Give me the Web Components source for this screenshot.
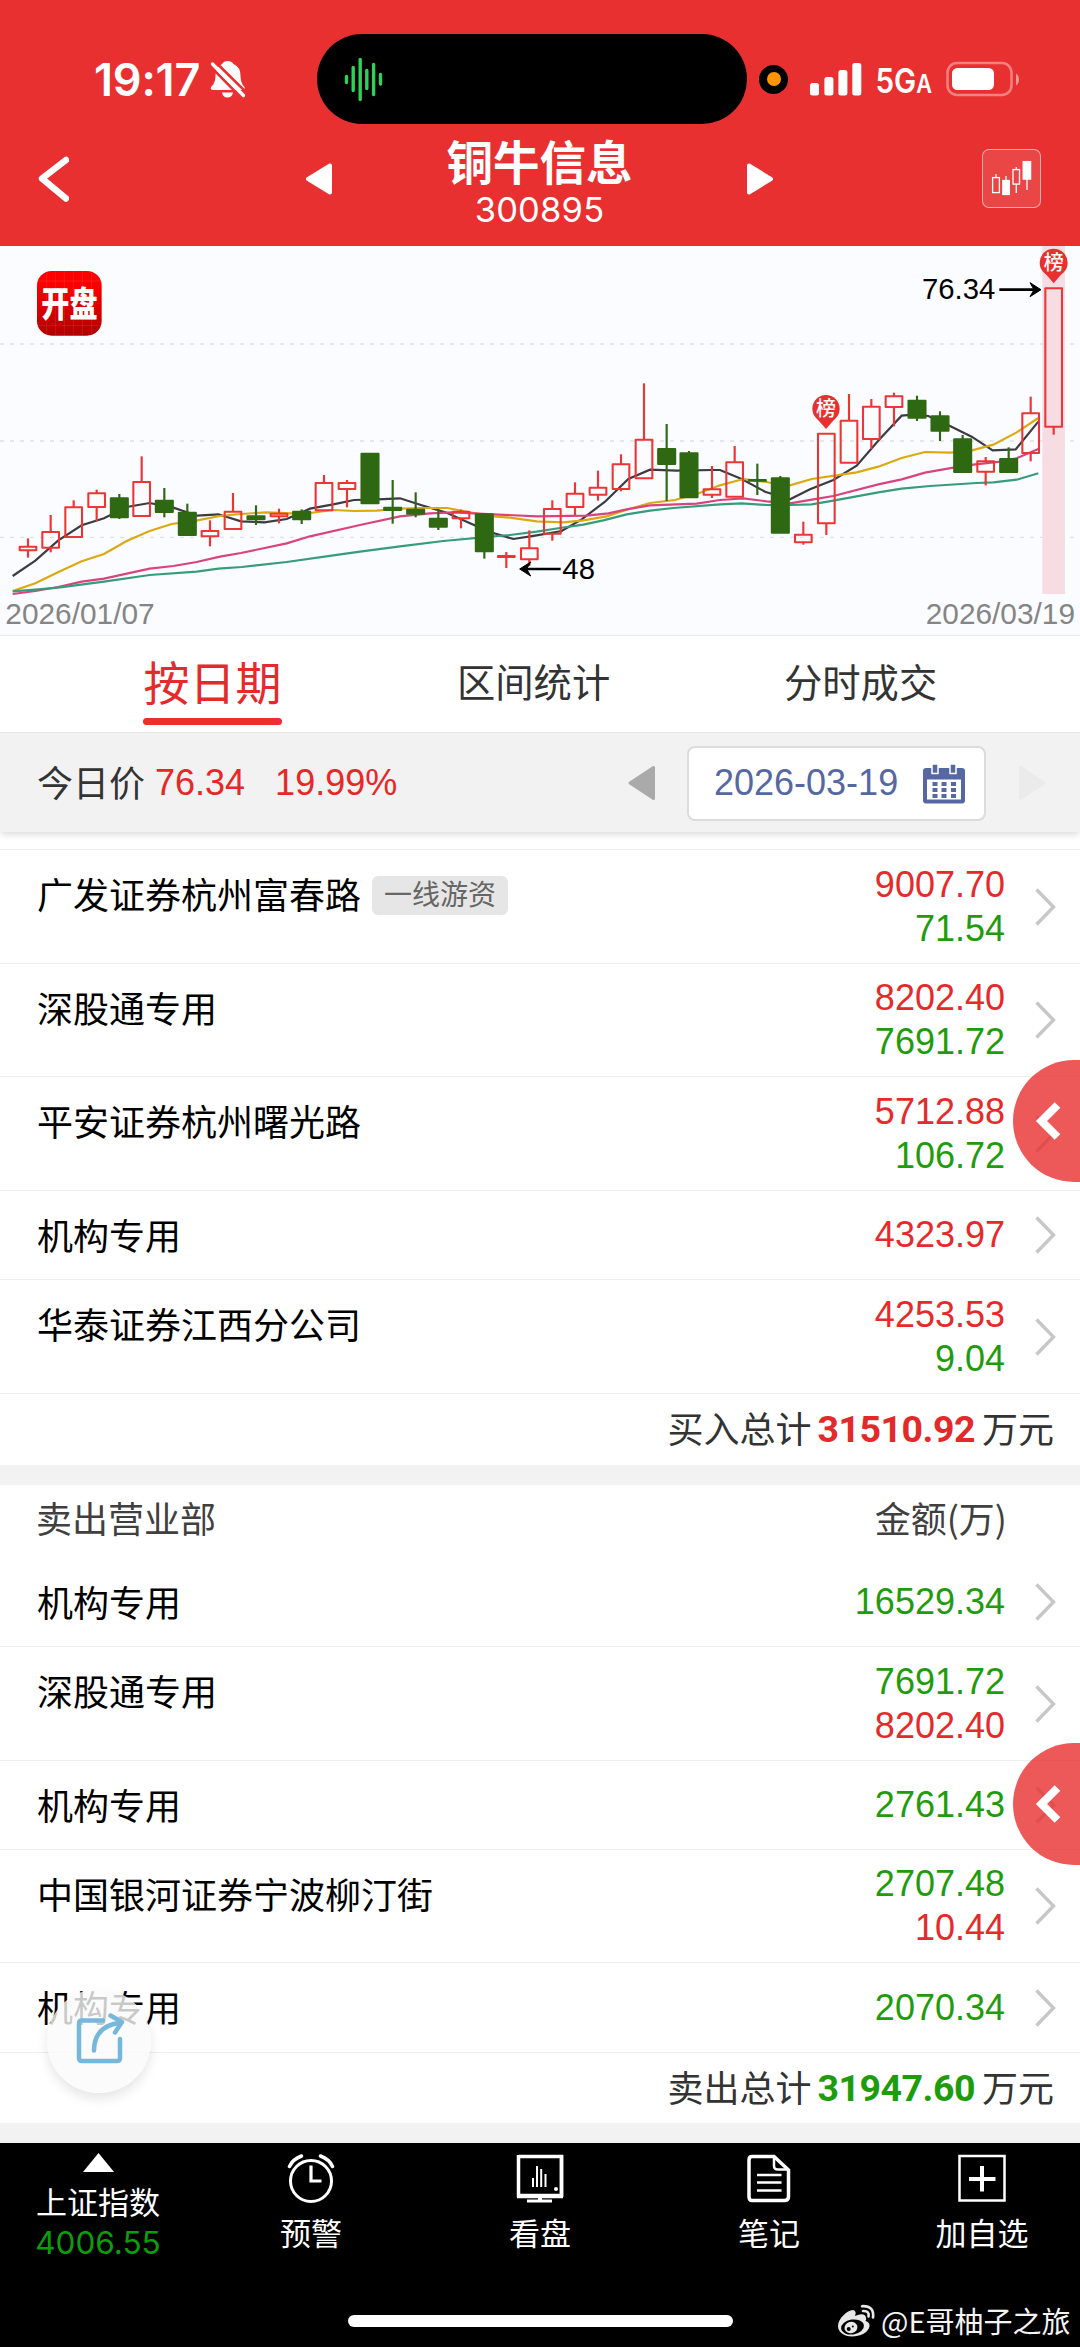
<!DOCTYPE html>
<html lang="zh-CN">
<head>
<meta charset="utf-8">
<meta name="viewport" content="width=1080">
<title>铜牛信息 300895</title>
<style>
html, body { margin: 0; padding: 0; background: #fff; }
body { width: 1080px; height: 2347px; overflow: hidden; }
</style>
</head>
<body>
<stock-app></stock-app>
<script>
const CJK = '"Noto Sans CJK SC", sans-serif';
const NUM = '"Liberation Sans", "Noto Sans CJK SC", sans-serif';

class BaseElement extends HTMLElement {
  connectedCallback() {
    if (this.shadowRoot) return;
    const t = document.createElement('template');
    t.innerHTML = `<style>*{box-sizing:border-box}svg{display:block;flex:none}${this.css()}</style>${this.html()}`;
    this.attachShadow({ mode: 'open' }).append(t.content.cloneNode(true));
  }
  css() { return ''; }
  html() { return ''; }
}

class StatusBar extends BaseElement {
  css() { return `
    :host{display:flex;align-items:center;height:124px;padding:34px 0 0 94px;color:#fff}
    .time{width:110px;font:600 45px/50px Inter,sans-serif;letter-spacing:-.2px;white-space:nowrap;padding-top:1px}
    .bell{margin-left:6px}
    .island{margin-left:71px;width:430px;height:90px;border-radius:45px;background:#000;display:flex;align-items:center;padding-left:27px;flex:none}
    .dot{margin-left:12px;width:29px;height:29px;border-radius:50%;background:#000;border:0;display:flex;align-items:center;justify-content:center;flex:none}
    .dot i{width:14px;height:14px;border-radius:50%;background:#ff9500}
    .sig{margin-left:22px}.net{margin-left:13px}.bat{margin-left:11px}`; }
  html() { return `
    <div class="time">19:17</div>
    <svg class="bell" width="36" height="40" viewBox="210 60 36 40">
      <path d="M227.500 62q4 0 6 3q7 3 7 12q0 7 4 11q1 3-2 3H213q-3 0-2-3q4.500-4 4.500-11q0-9 6.500-12q2-3 5.500-3zM222 93.500h11q-1 5-5.500 5t-5.500-5z" fill="#fff"/>
      <path d="M209.500 66.500L242 99.500M215 62.500L246 93" stroke="#e93030" stroke-width="2.600"/>
      <path d="M212.500 65L243.500 96.500" stroke="#fff" stroke-width="3.400" stroke-linecap="round"/>
    </svg>
    <div class="island">
      <svg width="40" height="46" viewBox="343 56.500 40 46" stroke="#30d158" stroke-width="3.400" stroke-linecap="round">
        <path d="M345.500 77v6M352.200 68v23M359.200 60v40M365.800 71v18M372.600 65v30M379.500 75v9.500"/>
      </svg>
    </div>
    <div class="dot"><i></i></div>
    <svg class="sig" width="52" height="34" viewBox="810 62 52 34" fill="#fff">
      <rect x="810" y="83" width="9" height="12.500" rx="2.500"/><rect x="824.400" y="77" width="9" height="18.500" rx="2.500"/>
      <rect x="838.400" y="70" width="9" height="25.500" rx="2.500"/><rect x="852.300" y="63" width="9" height="32.500" rx="2.500"/>
    </svg>
    <svg class="net" width="60" height="50" viewBox="875 55 60 50" fill="#fff" font-family="Inter,sans-serif" font-weight="600">
      <text x="875.500" y="94" font-size="34" textLength="56.500" lengthAdjust="spacingAndGlyphs">5G<tspan font-size="25">A</tspan></text>
    </svg>
    <svg class="bat" width="74" height="36" viewBox="947 61 74 36">
      <rect x="948.500" y="63" width="64" height="32" rx="9.500" fill="none" stroke="#fff" stroke-opacity=".4" stroke-width="2.500"/>
      <rect x="953" y="68" width="42" height="22" rx="5.500" fill="#fff"/>
      <path d="M1017 73.500q3 2 3 6t-3 6z" fill="#fff" fill-opacity=".5"/>
    </svg>`; }
}

class TitleBar extends BaseElement {
  css() { return `
    :host{display:flex;align-items:center;height:122px;padding:0 39px 13px 38px;color:#fff}
    .prev{margin-left:236px}
    .name{flex:1;align-self:flex-start;margin-top:14px;text-align:center}
    ::slotted(span){display:block}
    h1{margin:0;font:600 46.500px/44px ${CJK};height:50px}
    p{margin:0;font:400 34.500px/44px Inter,sans-serif;letter-spacing:.2px}
    .btn{margin-left:208px;width:59px;height:59px;border-radius:7px;border:1px solid rgba(255,255,255,.55);background:rgba(255,255,255,.11);flex:none}`; }
  html() { return `
    <svg width="31" height="46" viewBox="38 155.500 31 46"><path d="M66 159.500L42 178L66 198" fill="none" stroke="#fff" stroke-width="6.500" stroke-linecap="round" stroke-linejoin="round"/></svg>
    <svg class="prev" width="27" height="32" viewBox="0 0 27 32"><path d="M25 2.500V29.500L3 16z" fill="#fff" stroke="#fff" stroke-width="4" stroke-linejoin="round"/></svg>
    <div class="name"><h1><slot name="name"></slot></h1><p><slot name="code"></slot></p></div>
    <svg width="27" height="32" viewBox="0 0 27 32"><path d="M2 2.500V29.500L24 16z" fill="#fff" stroke="#fff" stroke-width="4" stroke-linejoin="round"/></svg>
    <div class="btn"><svg width="57" height="57" viewBox="983 150 57 57" fill="none" stroke="#fff" stroke-width="1.300">
      <rect x="992.600" y="177.600" width="6.800" height="15"/><path d="M996 177.600V174"/>
      <rect x="1002.800" y="180.500" width="6.500" height="14" fill="#fff"/><path d="M1006 180V176"/>
      <rect x="1013" y="169.600" width="6.500" height="14.500"/><path d="M1016.300 169.600V167M1016.300 184.500V193"/>
      <rect x="1023.200" y="161.600" width="7.400" height="17.500" fill="#fff"/><path d="M1027 179V190"/>
    </svg></div>`; }
}

/* colour, centre x, wick top, wick bottom, body top, body bottom (one px = 3 units) */
const CANDLES = [
  ['r',84,895,953,920,931],['r',152,825,937,876,923],['r',221,781,893,802,891],['r',290,749,843,760,801],
  ['g',358,762,837,774,833],['r',425,649,828,726,828],['g',493,744,832,781,817],['g',562,791,886,817,886],
  ['r',630,841,919,873,889],['r',699,759,867,815,867],['g',768,796,855,828,839],['r',837,806,850,821,829],
  ['g',905,808,852,814,839],['r',972,705,811,729,811],['r',1041,720,802,729,747],['g',1110,640,791,640,791],
  ['g',1178,720,851,802,811],['g',1247,757,832,808,822],['g',1315,808,870,835,861],['r',1383,809,865,815,835],
  ['g',1453,822,956,822,935],['r',1519,936,984,948,951],['r',1588,871,978,925,958],['r',1657,781,902,807,881],
  ['r',1725,727,825,761,801],['r',1794,692,782,743,764],['r',1863,643,754,673,747],['r',1932,430,715,599,715],
  ['g',2000,552,783,626,673],['g',2067,633,773,639,773],['r',2136,678,774,748,764],['r',2204,618,770,667,770],
  ['g',2272,671,765,719,723],['g',2341,708,879,714,879],['r',2410,845,914,884,907],['r',2479,581,885,581,850],
  ['r',2547,462,668,542,668],['r',2614,477,627,500,597],['r',2682,458,559,469,501],['g',2751,467,543,481,534],
  ['g',2820,514,603,528,573],['g',2888,585,699,597,697],['r',2957,651,736,664,695],['g',3026,622,697,656,697],
  ['r',3092,470,664,520,639],['r',3161,145,584,145,560]
];
const LINES = [
  ['#3b3b40','38,1008 106,962 174,902 245,856 312,835 380,801 449,789 520,803 592,827 655,823 723,844 793,847 860,837 930,806 1000,793 1062,780 1132,778 1200,775 1270,797 1340,818 1410,850 1470,876 1540,897 1610,886 1685,873 1745,838 1815,785 1885,717 1950,689 2030,692 2140,690 2160,690 2225,717 2295,755 2370,778 2430,748 2500,720 2570,677 2640,596 2705,527 2740,524 2785,528 2850,558 2915,590 2978,631 3047,628 3115,545'],
  ['#dba910','38,1053 106,1030 174,997 245,964 312,942 380,903 449,873 515,852 592,841 660,828 723,822 800,817 870,820 930,819 1000,810 1062,813 1130,812 1200,806 1270,804 1342,804 1405,816 1480,829 1530,833 1610,844 1690,847 1750,841 1820,829 1880,809 1950,789 2025,780 2090,762 2160,736 2230,717 2300,726 2340,735 2370,736 2435,717 2570,697 2635,680 2705,654 2775,636 2850,638 2905,634 2980,614 3050,577 3115,534'],
  ['#d9437f','38,1062 106,1053 174,1041 245,1025 312,1016 449,986 520,978 590,966 660,950 723,939 860,910 930,889 1080,855 1200,829 1290,820 1360,817 1480,823 1610,829 1760,827 1825,820 1880,808 1950,796 2090,791 2160,780 2230,775 2300,784 2370,790 2440,778 2500,768 2635,733 2705,718 2775,698 2860,683 2920,674 3000,665 3050,655 3115,627'],
  ['#379c7a','38,1054 106,1049 174,1043 312,1025 449,1005 590,995 655,986 725,981 860,966 1000,946 1080,935 1200,919 1330,903 1480,889 1530,885 1610,875 1680,864 1750,854 1810,841 1880,823 1950,812 2020,804 2160,793 2225,790 2300,795 2370,795 2435,793 2500,782 2635,757 2705,746 2790,738 2930,729 2980,727 3050,719 3115,700']
];
class KlineChart extends BaseElement {
  css() { return `:host{display:block;height:390px;background:#fbfcff;border-bottom:1px solid #e9eaec}`; }
  html() {
    const candle = ([c, x, wt, wb, t, b]) => {
      const col = c === 'r' ? '#ec3535' : '#2f6812', k = c === 'r' ? 3 : 2.500;
      const y = c === 'r' ? t : t + 1, h = Math.max(b - y - (c === 'r' ? 0 : 1), 2);
      return `<g stroke="${col}" stroke-width="6.500" fill="${c === 'r' ? 'none' : col}" stroke-linejoin="round">` +
        (wt < t ? `<path d="M${x} ${wt}V${t}"/>` : '') + (wb > b ? `<path d="M${x} ${b}V${wb}"/>` : '') +
        `<rect x="${x - 28 + k}" y="${y}" width="${56 - 2 * k}" height="${h}" stroke-width="6.200"/></g>`;
    };
    const pin = (x, y, r) => `<circle cx="${x}" cy="${y}" r="${r}" fill="#e93030"/><path d="M${x - 27} ${y + 30}L${x} ${y + r + 20}L${x + 27} ${y + 30}z" fill="#e93030"/>
      <text x="${x}" y="${y + 22}" font-size="60" font-weight="500" fill="#fff" text-anchor="middle" style="font-family:'Noto Sans CJK SC',sans-serif">榜</text>`;
    return `<svg width="1080" height="389" viewBox="0 18 3240 1167" font-family="Liberation Sans, sans-serif">
      <defs><linearGradient id="logo" x1="0" y1="0" x2="0" y2="1"><stop offset="0" stop-color="#ff0000"/><stop offset=".2" stop-color="#fb0000"/><stop offset="1" stop-color="#b00000"/></linearGradient></defs>
      <path d="M0 312H3240M0 603H3240M0 892H3240" stroke="#dfdfe6" stroke-width="4" stroke-dasharray="12 18"/>
      <rect x="3127" y="18" width="68" height="1044" fill="#f6dde3"/>
      ${LINES.map(([c, p]) => `<polyline points="${p}" fill="none" stroke="${c}" stroke-width="6.500"/>`).join('')}
      ${CANDLES.map(candle).join('')}
      ${pin(2478, 506, 41)}${pin(3161, 68, 42)}
      <rect x="111" y="93" width="194" height="194" rx="44" fill="url(#logo)"/>
      <path d="M140 97v186M166 93v194M193 93v194M220 93v194M247 93v194M275 97v186M111 123h194M111 256h194" stroke="#fff" stroke-opacity=".14" stroke-width="2"/>
      <text x="124" y="231" font-size="106" font-weight="900" fill="#fff" textLength="169" lengthAdjust="spacingAndGlyphs" style="font-family:'Noto Sans CJK SC',sans-serif">开盘</text>
      <path d="M2998 149H3114" stroke="#000" stroke-width="8"/><path d="M3090 128L3123 149L3090 170L3102 149z" stroke="#000" stroke-width="3"/>
      <path d="M1568 987H1682" stroke="#000" stroke-width="8"/><path d="M1592 966L1559 987L1592 1008L1580 987z" stroke="#000" stroke-width="3"/>
      <text x="2766" y="178" font-size="88">76.34</text>
      <text x="1687" y="1018" font-size="88">48</text>
      <text x="16" y="1152" font-size="89.500" fill="#858585">2026/01/07</text>
      <text x="3225" y="1152" font-size="89.500" fill="#858585" text-anchor="end">2026/03/19</text>
    </svg>`;
  }
}

class TabBar extends BaseElement {
  css() { return `
    :host{display:flex;height:97px;padding-left:143px;background:#fff;border-bottom:1px solid #e6e6e6;color:#333;font:400 38.300px/89px ${CJK}}
    .on{width:139px;font-size:46px;color:#e42a2a;text-align:center;display:flex;flex-direction:column;white-space:nowrap}
    .on span{height:82px}
    .on i{height:7px;border-radius:4px;background:#e93030}
    .b{margin-left:175px;width:154px}.c{margin-left:173px;width:154px}`; }
  html() { return `<div class="on"><span>按日期</span><i></i></div><div class="b">区间统计</div><div class="c">分时成交</div>`; }
}

class DateBar extends BaseElement {
  css() { return `
    :host{display:flex;align-items:center;height:99px;padding:0 34px 0 37px;background:#f2f2f2;box-shadow:0 4px 6px -1px rgba(0,0,0,.13);position:relative;font:400 36px/60px ${NUM};color:#333;white-space:nowrap}
    .l{font:400 36px/56px ${CJK};height:60px}
    .p{color:#e62828;margin-left:10px}.q{color:#e62828;margin-left:30px}
    .left{margin-left:auto}
    .box{display:flex;align-items:center;margin:2px 33px 0 32px;width:299px;height:75px;border:2px solid #dcdcdc;border-radius:8px;background:#fff;color:#5568a1;padding-left:25px;font-size:36px}
    .box svg{margin-left:22px}
    .box span{width:187px;height:62px}`; }
  html() { return `
    <span class="l">今日价</span><span class="p">76.34</span><span class="q">19.99%</span>
    <svg class="left" width="27" height="36" viewBox="0 0 27 36"><path d="M25.500 2.500V33.500L2 18z" fill="#aaa" stroke="#aaa" stroke-width="3" stroke-linejoin="round"/></svg>
    <div class="box"><span>2026-03-19</span>
      <svg width="42" height="40" viewBox="0 0 42 40"><path d="M0 7q0-3 3-3H39q3 0 3 3V36.500q0 3-3 3H3q-3 0-3-3z" fill="#5568a1"/><path d="M4 15.500H38V35.500H4z" fill="#fff"/>
      <path d="M9 0h6v9.500h-6zM27 0h6v9.500h-6z" fill="#5568a1" stroke="#fff" stroke-width="1.500"/>
      <path d="M9.500 18h5v4h-5zM18.500 18h5v4h-5zM28 18h5v4h-5zM9.500 24h5v4h-5zM18.500 24h5v4h-5zM28 24h5v4h-5zM9.500 30h5v4h-5zM18.500 30h5v4h-5zM28 30h5v4h-5z" fill="#5568a1"/></svg>
    </div>
    <svg width="27" height="36" viewBox="0 0 27 36"><path d="M1.500 2.500V33.500L25 18z" fill="#ebebeb" stroke="#ebebeb" stroke-width="3" stroke-linejoin="round"/></svg>`; }
}

class SeatRow extends BaseElement {
  css() { return `
    :host{display:flex;height:var(--h,114px);border-top:1px solid #eee;padding:0 23px 0 37px;background:#fff}
    :host([plain]){border-top-color:#fff}
    .n{flex:1;display:flex;align-items:flex-start;font:400 36px/87px ${CJK};color:#000;white-space:nowrap}
    .tag{margin:26px 0 0 11px;height:39px;border-radius:6px;background:#e6e6e6;color:#666;font:400 28px/35px ${CJK};padding:0 12px}
    .v{display:flex;flex-direction:column;justify-content:center;text-align:right;font:400 36px/44px ${NUM};width:200px}
    .v span{display:block}
    .r{color:#e62a2a}.g{color:#1f9c0e}
    svg{margin-left:30px;align-self:center}`; }
  html() {
    const a = k => this.getAttribute(k);
    const v = (a('v') || '').split(' ').map(s => `<span class="${s[0]}">${s.slice(1)}</span>`).join('');
    return `<div class="n"><slot></slot>${a('tag') ? `<span class="tag">${a('tag')}</span>` : ''}</div>
      <div class="v">${v}</div>
      <svg width="22" height="38" viewBox="0 0 22 38"><path d="M1.500 1.500L18.500 19L1.500 36.500" fill="none" stroke="#c7c7c7" stroke-width="3.400"/></svg>`;
  }
}

class TotalRow extends BaseElement {
  css() { return `
    :host{display:flex;justify-content:flex-end;height:var(--h,72px);border-top:1px solid #eee;padding-right:26px;background:#fff;color:#333;font:400 36px/67px ${CJK}}
    b{font:700 37.500px/71px Roboto,sans-serif;letter-spacing:-.5px;color:var(--c);margin:0 7px 0 6px}`; }
  html() { return `<span><slot></slot></span><b>${this.getAttribute('sum')}</b><span>万元</span>`; }
}

class ListHead extends BaseElement {
  css() { return `:host{display:flex;justify-content:space-between;height:72px;padding:0 73px 0 36px;background:#fff;color:#404040;font:400 36px/64px ${CJK}}`; }
  html() { return `<span>卖出营业部</span><span>金额(万)</span>`; }
}

class SideHandle extends BaseElement {
  css() { return `:host{position:absolute;right:0;width:67px;height:122px;border-radius:61px 0 0 61px / 61px 0 0 61px;background:rgba(233,48,48,.8);overflow:hidden}`; }
  html() { return `<svg width="67" height="122" viewBox="1013 1060 67 122"><path d="M1057.500 1105L1041.500 1121L1057.500 1137" fill="none" stroke="#fff" stroke-width="8"/></svg>`; }
}

class ShareButton extends BaseElement {
  css() { return `:host{position:absolute;left:47px;top:1989px;width:104px;height:104px;border-radius:50%;background:rgba(250,250,250,.8);box-shadow:0 6px 12px rgba(0,0,0,.1)}`; }
  html() { return `<svg width="104" height="104" viewBox="47 1989 104 104" fill="none" stroke="#76b8dc" stroke-width="4.500" stroke-linecap="round" stroke-linejoin="round">
    <path d="M103 2020.500H82q-3 0-3 3V2058q0 3 3 3H117q3 0 3-3V2039"/><path d="M94 2050.500Q94 2026 121 2022.500M110.500 2015.500L122 2022L115 2032.500"/></svg>`; }
}

class NavItem extends BaseElement {
  css() { return `
    :host{display:flex;flex-direction:column;align-items:center;width:var(--w);padding-top:11px;color:#fff;font:400 31px/40px ${CJK};white-space:nowrap;flex:none}
    span{margin-top:9px}`; }
  html() {
    const icons = {
      clock: '<circle cx="24" cy="27" r="20.500" stroke-width="3"/><path d="M24 11.500V27H34.500" stroke-width="3.200"/><path d="M2.500 12.500Q6 5 14.500 2M33.500 2Q42 5 45.500 12.500" stroke-width="3.500" stroke-linecap="round"/>',
      screen: '<path d="M2.500 2.500H45.500V42.500" stroke-width="3.500"/><path d="M2.500 1V43M45.500 1V43" stroke-width="3.500"/><path d="M1 42H47" stroke-width="4.500"/><path d="M11 47H36" stroke-width="3"/><path d="M24 43v4" stroke-width="4"/><path d="M17 33V24M21 33V12M25.200 33V15M29.500 33V20" stroke-width="2"/><circle cx="40" cy="35" r="2" fill="#fff" stroke="none"/>',
      note: '<path d="M7 2.500H29L43.500 16V42.500Q43.500 46.500 39.500 46.500H7Q4 46.500 4 42.500V6Q4 2.500 7 2.500z" stroke-width="3.500"/><path d="M29 3V12Q29 15.500 33 15.500H43" stroke-width="2.500"/><path d="M12 21H36.500M12 28.500H36.500M12 36.500H36.500" stroke-width="2.600"/>',
      plus: '<rect x="1.500" y="2" width="45" height="44.500" stroke-width="2.500"/><path d="M24 12V37.500M11 25H37.500" stroke-width="4"/>'
    };
    return `<svg width="48" height="49" viewBox="0 0 48 49" fill="none" stroke="#fff">${icons[this.getAttribute('icon')]}</svg><span><slot></slot></span>`;
  }
}

class BottomBar extends BaseElement {
  css() { return `
    :host{display:block;height:204px;background:#000;color:#fff}
    .row{display:flex;height:162px;padding-left:34px}
    .idx{width:128px;display:flex;flex-direction:column;align-items:center;padding-top:10px;font:400 31px/38px ${CJK};white-space:nowrap;margin-right:85px}
    .idx span{margin-top:10px}
    .idx b{font:400 31.500px/40px Inter,sans-serif;color:#0c9c0c;margin-top:3px}
    .home{display:flex;align-items:flex-start;padding-left:348px;height:42px}
    .bar{width:385px;height:12px;border-radius:6px;background:#fff;margin-top:10px}
    .wm{display:flex;align-items:center;margin-left:104px;height:31px;font:400 29px/30px ${CJK};white-space:nowrap;color:#f4f4f4}
    .wm span{margin-left:5px;height:32px}`; }
  html() { return `
    <div class="row">
      <div class="idx"><svg width="31" height="19" viewBox="0 0 31 19"><path d="M15.500 0L31 19H0z" fill="#fff"/></svg><span>上证指数</span><b>4006.55</b></div>
      <nav-item icon="clock" style="--w:128px">预警</nav-item>
      <nav-item icon="screen" style="--w:128px;margin-left:101px">看盘</nav-item>
      <nav-item icon="note" style="--w:128px;margin-left:101px">笔记</nav-item>
      <nav-item icon="plus" style="--w:128px;margin-left:85px">加自选</nav-item>
    </div>
    <div class="home"><div class="bar"></div>
      <div class="wm"><svg width="39" height="34" viewBox="0 0 39 34">
        <path d="M1 22C1 15 10 6 16 6Q20 7 18 12Q25 9 28 11.500Q30 14 28.500 17Q33 18 32.500 22.500C31 29 23 32.500 15 32.500C7 32.500 1 28 1 22z" fill="#e8e8e8"/>
        <ellipse cx="15.500" cy="23" rx="11.500" ry="7.500" fill="#000" transform="rotate(-8 15.500 23)"/>
        <ellipse cx="14" cy="23.500" rx="6.500" ry="5.600" fill="#e8e8e8" transform="rotate(-15 14 23.500)"/><circle cx="11.700" cy="25" r="2" fill="#000"/><circle cx="15.800" cy="22.500" r="1" fill="#000"/>
        <path d="M25 2.200Q37.500 1.500 36 13.500M26 7Q32.500 6.500 31.500 12.500" fill="none" stroke="#e8e8e8" stroke-width="2.600" stroke-linecap="round"/></svg>
        <span>@E哥柚子之旅</span></div>
    </div>`; }
}

class StockApp extends BaseElement {
  css() { return `
    :host{display:flex;flex-direction:column;position:relative;width:1080px;height:2347px;background:#fff;overflow:hidden}
    :host>*{flex:none}
    header{background:#e93030;height:246px;flex:none}
    .sp{height:17px}.gap{background:#f2f2f2}`; }
  html() { return `
    <header><status-bar></status-bar><title-bar><span slot="name">铜牛信息</span><span slot="code">300895</span></title-bar></header>
    <kline-chart></kline-chart>
    <tab-bar></tab-bar>
    <date-bar></date-bar>
    <div class="sp"></div>
    <seat-row tag="一线游资" v="r9007.70 g71.54">广发证券杭州富春路</seat-row>
    <seat-row style="--h:113px" v="r8202.40 g7691.72">深股通专用</seat-row>
    <seat-row v="r5712.88 g106.72">平安证券杭州曙光路</seat-row>
    <seat-row style="--h:89px" v="r4323.97">机构专用</seat-row>
    <seat-row v="r4253.53 g9.04">华泰证券江西分公司</seat-row>
    <total-row style="--c:#e22a2a" sum="31510.92">买入总计</total-row>
    <div class="gap" style="height:20px"></div>
    <list-head></list-head>
    <seat-row plain style="--h:89px" v="g16529.34">机构专用</seat-row>
    <seat-row v="g7691.72 r8202.40">深股通专用</seat-row>
    <seat-row style="--h:89px" v="g2761.43">机构专用</seat-row>
    <seat-row style="--h:113px" v="g2707.48 r10.44">中国银河证券宁波柳汀街</seat-row>
    <seat-row style="--h:90px" v="g2070.34">机构专用</seat-row>
    <total-row style="--c:#1f9c0e;--h:71px" sum="31947.60">卖出总计</total-row>
    <div class="gap" style="height:20px"></div>
    <bottom-bar></bottom-bar>
    <side-handle style="top:1060px"></side-handle>
    <side-handle style="top:1743px"></side-handle>
    <share-button></share-button>`; }
}

[['status-bar', StatusBar], ['title-bar', TitleBar], ['kline-chart', KlineChart], ['tab-bar', TabBar], ['date-bar', DateBar],
 ['seat-row', SeatRow], ['total-row', TotalRow], ['list-head', ListHead], ['side-handle', SideHandle], ['share-button', ShareButton],
 ['nav-item', NavItem], ['bottom-bar', BottomBar], ['stock-app', StockApp]].forEach(([n, c]) => customElements.define(n, c));
</script>
</body>
</html>
